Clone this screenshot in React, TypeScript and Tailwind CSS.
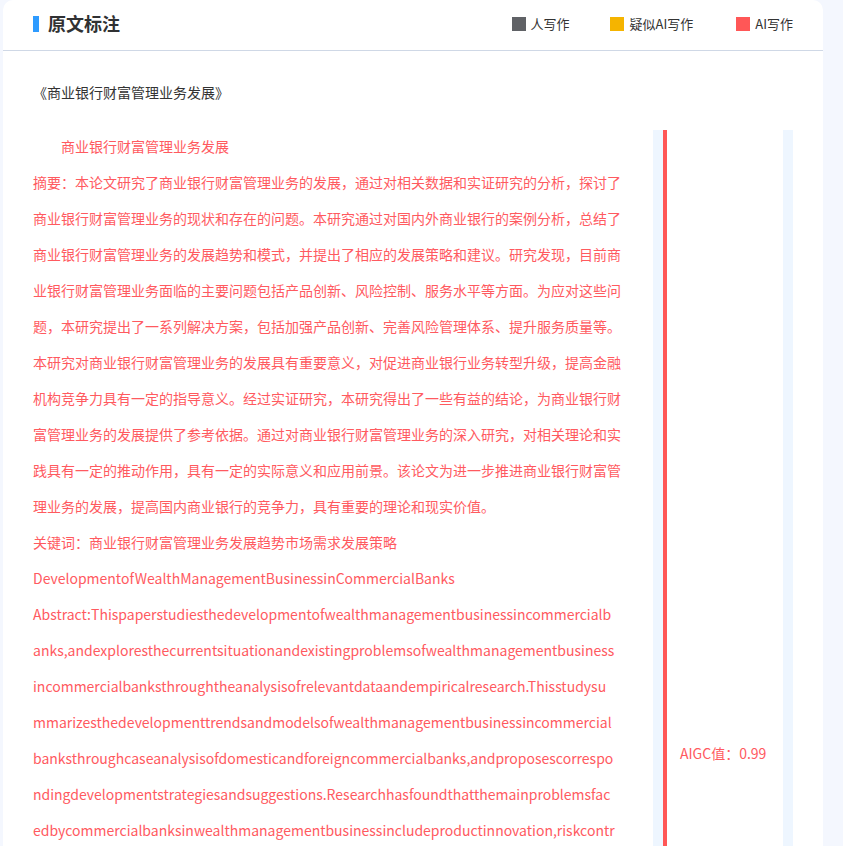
import React from "react";

const zhLines = [
  "摘要：本论文研究了商业银行财富管理业务的发展，通过对相关数据和实证研究的分析，探讨了",
  "商业银行财富管理业务的现状和存在的问题。本研究通过对国内外商业银行的案例分析，总结了",
  "商业银行财富管理业务的发展趋势和模式，并提出了相应的发展策略和建议。研究发现，目前商",
  "业银行财富管理业务面临的主要问题包括产品创新、风险控制、服务水平等方面。为应对这些问",
  "题，本研究提出了一系列解决方案，包括加强产品创新、完善风险管理体系、提升服务质量等。",
  "本研究对商业银行财富管理业务的发展具有重要意义，对促进商业银行业务转型升级，提高金融",
  "机构竞争力具有一定的指导意义。经过实证研究，本研究得出了一些有益的结论，为商业银行财",
  "富管理业务的发展提供了参考依据。通过对商业银行财富管理业务的深入研究，对相关理论和实",
  "践具有一定的推动作用，具有一定的实际意义和应用前景。该论文为进一步推进商业银行财富管",
  "理业务的发展，提高国内商业银行的竞争力，具有重要的理论和现实价值。",
  "关键词：商业银行财富管理业务发展趋势市场需求发展策略",
];

const enLines = [
  "DevelopmentofWealthManagementBusinessinCommercialBanks",
  "Abstract:Thispaperstudiesthedevelopmentofwealthmanagementbusinessincommercialb",
  "anks,andexploresthecurrentsituationandexistingproblemsofwealthmanagementbusiness",
  "incommercialbanksthroughtheanalysisofrelevantdataandempiricalresearch.Thisstudysu",
  "mmarizesthedevelopmenttrendsandmodelsofwealthmanagementbusinessincommercial",
  "banksthroughcaseanalysisofdomesticandforeigncommercialbanks,andproposescorrespo",
  "ndingdevelopmentstrategiesandsuggestions.Researchhasfoundthatthemainproblemsfac",
  "edbycommercialbanksinwealthmanagementbusinessincludeproductinnovation,riskcontr",
  "ol,servicelevelandotheraspects.Inordertodealwiththeseproblems,thisstudyproposes",
];

export default function App() {
  return (
    <div
      className="min-h-[846px] bg-[#f4f7fe] pl-[3px] pr-[20px]"
      style={{ fontFamily: '"Noto Sans CJK SC", "Noto Sans", sans-serif' }}
    >
      <div className="h-[846px] overflow-hidden rounded-t-[10px] bg-white">
        {/* header */}
        <div className="flex h-[51px] items-center border-b border-[#cfd8e6] pb-[4px] pl-[30px] pr-[30px]">
          <div className="mt-[1px] h-[16px] w-[6px] bg-[#2e9bff]" />
          <div className="ml-[9px] text-[18px] font-bold leading-[24px] text-[#303133]">原文标注</div>
          <div className="ml-auto flex items-center pt-[2px] text-[13px] text-[#333]">
            <div className="flex items-center">
              <span className="h-[14px] w-[14px] bg-[#606266]" />
              <span className="ml-[5px]">人写作</span>
            </div>
            <div className="ml-[40px] flex items-center">
              <span className="h-[14px] w-[14px] bg-[#f5b400]" />
              <span className="ml-[6px]">疑似AI写作</span>
            </div>
            <div className="ml-[43px] flex items-center">
              <span className="h-[14px] w-[14px] bg-[#ff5757]" />
              <span className="ml-[5px]">AI写作</span>
            </div>
          </div>
        </div>

        {/* doc title */}
        <div className="pl-[30px] pt-[31px] text-[14px] leading-[20px] text-[#333]">
          《商业银行财富管理业务发展》
        </div>

        {/* body */}
        <div className="mt-[28px] flex pl-[30px]">
          <div className="-mt-[2px] w-[620px] text-[14px] leading-[36px] text-[#ff5a5f]">
            <div className="pl-[28px]">商业银行财富管理业务发展</div>
            {zhLines.map((l, i) => (
              <div key={"z" + i} className="whitespace-nowrap">
                {l}
              </div>
            ))}
            {enLines.map((l, i) => (
              <div key={"e" + i} className="whitespace-nowrap">
                {l}
              </div>
            ))}
          </div>
          <div className="flex">
            <div className="w-[10px] bg-[#eef6ff]" />
            <div className="w-[4px] bg-[#ff5757]" />
            <div className="w-[116px] pl-[13px] pt-[613px] text-[14px] leading-[20px] text-[#ff5a5f]">
              AIGC值：0.99
            </div>
            <div className="w-[10px] bg-[#eef6ff]" />
          </div>
        </div>
      </div>
    </div>
  );
}
